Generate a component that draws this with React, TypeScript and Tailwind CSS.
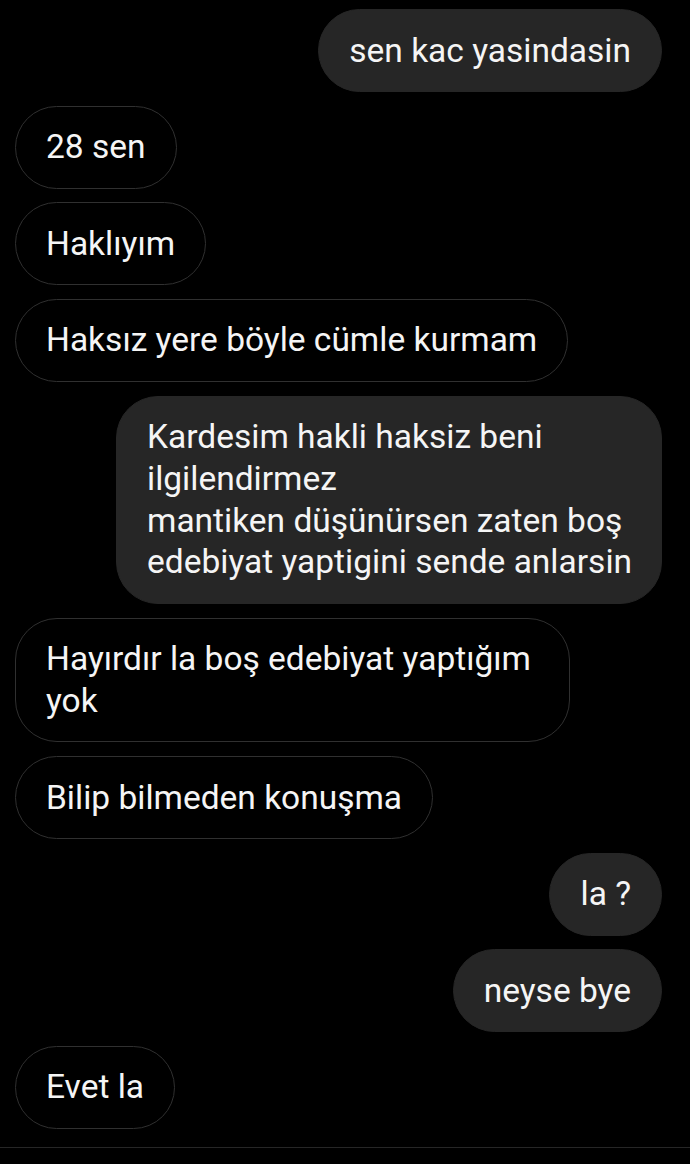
const messages: { me: boolean; lines: string[]; w?: string }[] = [
  { me: true, lines: ["sen kac yasindasin"] },
  { me: false, lines: ["28 sen"] },
  { me: false, lines: ["Haklıyım"] },
  { me: false, lines: ["Haksız yere böyle cümle kurmam"] },
  {
    me: true,
    lines: [
      "Kardesim hakli haksiz beni",
      "ilgilendirmez",
      "mantiken düşünürsen zaten boş",
      "edebiyat yaptigini sende anlarsin",
    ],
    w: "w-[546px]",
  },
  { me: false, lines: ["Hayırdır la boş edebiyat yaptığım", "yok"], w: "w-[555px]" },
  { me: false, lines: ["Bilip bilmeden konuşma"] },
  { me: true, lines: ["la ?"] },
  { me: true, lines: ["neyse bye"] },
  { me: false, lines: ["Evet la"] },
];

function Bubble({ me, lines, w }: { me: boolean; lines: string[]; w?: string }) {
  return (
    <div
      className={`${me ? "self-end bg-[#262626] border-[#262626]" : "self-start bg-black border-[#303030]"} ${w ?? ""} border rounded-[42px] px-[30px] py-[19.6px] text-[33.5px] leading-[41.8px] text-[#f5f5f5] whitespace-nowrap`}
    >
      {lines.map((l, i) => (
        <div key={i}>{l}</div>
      ))}
    </div>
  );
}

export default function App() {
  return (
    <div className="w-[690px] h-[1164px] bg-black overflow-hidden font-['Roboto',sans-serif]">
      <div className="flex flex-col gap-[13.65px] pt-[9px] pl-[15px] pr-[28px]">
        {messages.map((m, i) => (
          <Bubble key={i} {...m} />
        ))}
      </div>
      <div className="mt-[18.5px] border-t border-[#262626] h-[20px]" />
    </div>
  );
}
